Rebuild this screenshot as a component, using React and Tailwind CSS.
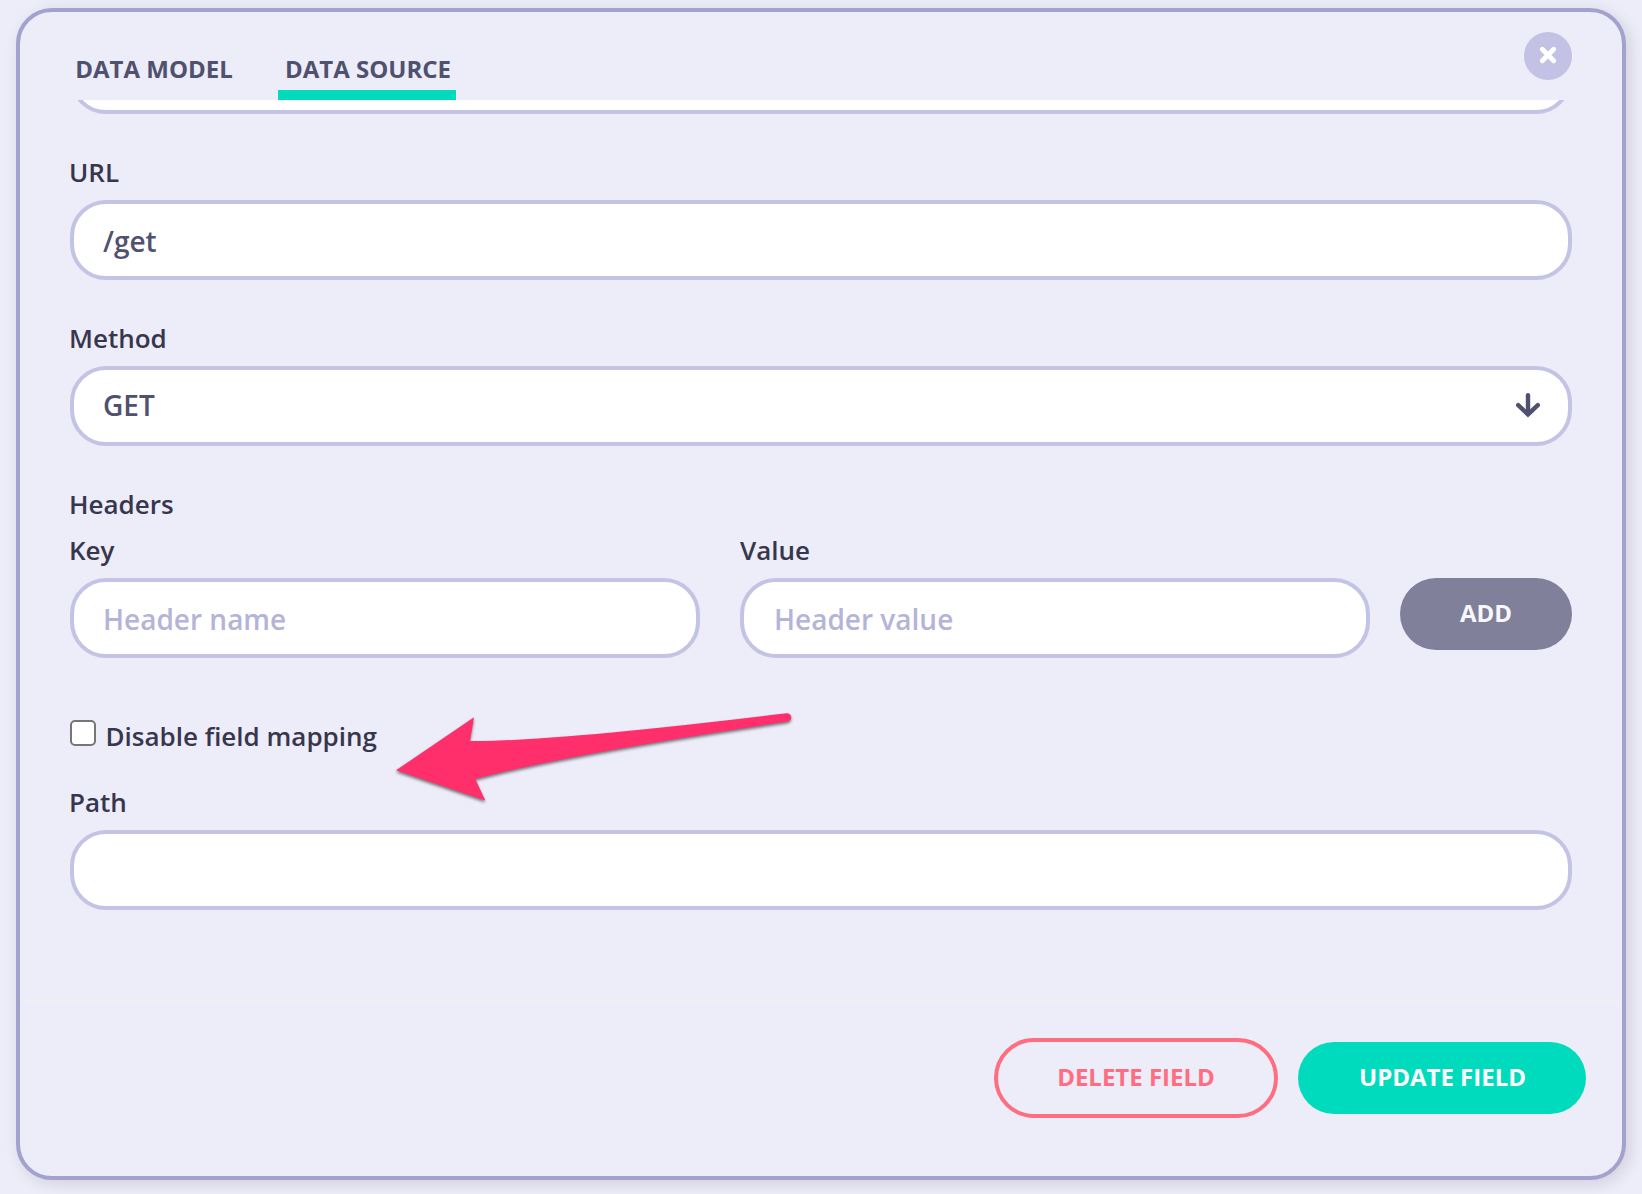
import React from "react";

const box =
  "h-20 w-full rounded-[36px] border-4 border-[#c3c3e6] bg-white px-[29px] text-[28px] font-semibold text-[#50506f] outline-none placeholder:text-[#b4b4d8] placeholder:opacity-100";

function Label({ children }) {
  return (
    <div className="text-[26px] leading-9 font-semibold text-[#37364d]">{children}</div>
  );
}

function Field({ label, children, className = "", labelClassName = "-ml-px" }) {
  return (
    <div className={`flex flex-col gap-2.5 ${className}`}>
      <div className={labelClassName}>
        <Label>{label}</Label>
      </div>
      {children}
    </div>
  );
}

function Pointer() {
  return (
    <svg
      className="pointer-events-none absolute top-[678px] left-[360px] drop-shadow-[0_2px_1.5px_rgba(0,0,0,0.5)]"
      width="440"
      height="130"
      viewBox="0 0 440 130"
    >
      <path
        fill="#ff2f6c"
        d="M16 80.3 L94 27.3 L90 51 Q173.3 51.7 406.5 23.3 A4.1 4.1 0 0 1 407.7 31.5 Q186.7 64.3 95.3 89 L105.3 110.6 Z"
      />
    </svg>
  );
}

export default function App() {
  return (
    <div className="h-[1194px] w-[1642px] overflow-hidden bg-[#edecf9] px-4 pt-2 font-['Open_Sans',sans-serif]">
      <div className="relative flex h-[1172px] w-[1610px] flex-col rounded-[36px] border-4 border-[#a3a2ce] bg-[#edecf9] shadow-[4px_4px_16px_rgba(0,0,0,0.12)]">
        <header className="flex h-[88px] shrink-0 items-end justify-between pr-[50px] pl-[46px] text-2xl leading-8 font-bold text-[#50506f]">
          <nav className="flex gap-[34px]">
            <button className="h-[51px] w-[178px] border-b-10 border-transparent pr-0.5 pb-px">DATA MODEL</button>
            <button className="h-[51px] w-[178px] border-b-10 border-[#00dbbd] pb-px pl-0.5">DATA SOURCE</button>
          </nav>
          <button className="mb-5 flex size-12 items-center justify-center rounded-full bg-[#c3c2e4]">
            <svg width="48" height="48" viewBox="0 0 48 48" stroke="#fff" strokeWidth="4.8" strokeLinecap="round">
              <path d="M18.3 17.3 L29.7 28.7 M29.7 17.3 L18.3 28.7" />
            </svg>
          </button>
        </header>

        <main className="flex h-[900px] shrink-0 flex-col overflow-hidden px-[50px]">
          <div className="-mt-[66px] shrink-0">
            <div className={box} />
          </div>
          <Field label="URL" className="mt-10">
            <input className={`${box} pt-0.5`} defaultValue="/get" />
          </Field>
          <Field label="Method" className="mt-10">
            <div className={`${box} flex items-center justify-between`}>
              <span className="-mt-0.5">GET</span>
              <svg width="28" height="28" viewBox="0 0 28 28" fill="none" stroke="#50506f" strokeWidth="4.4" strokeLinecap="round" className="-mr-[3px]">
                <path d="M14 3.2 V21" />
                <path d="M4.2 13.2 L14 22.4 L23.8 13.2" />
              </svg>
            </div>
          </Field>
          <div className="mt-10 -ml-px">
            <Label>Headers</Label>
          </div>
          <div className="mt-2.5 flex items-start">
            <Field label="Key" className="w-[630px]">
              <input className={`${box} pt-0.5`} placeholder="Header name" />
            </Field>
            <Field label="Value" className="ml-10 w-[630px]" labelClassName="">
              <input className={`${box} pt-0.5 pl-[30px]`} placeholder="Header value" />
            </Field>
            <button className="mt-[46px] ml-[30px] h-[72px] w-[172px] rounded-[36px] bg-[#81809b] pb-0.5 text-2xl font-bold text-[#f8f8fc]">
              ADD
            </button>
          </div>
          <label className="mt-[60px] flex h-9 items-start gap-[9.5px]">
            <input type="checkbox" className="mt-0.5 size-[26px] appearance-none rounded-[5px] border-2 border-[#767676] bg-white" />
            <Label>Disable field mapping</Label>
          </label>
          <Field label="Path" className="mt-[30px]">
            <input className={box} />
          </Field>
        </main>

        <footer className="flex flex-1 items-start justify-end gap-5 border-t-2 border-[#efefef] pt-9 pr-9 text-2xl font-bold">
          <button className="h-20 w-[284px] rounded-[40px] border-4 border-[#ff6e80] pb-0.5 text-[#ff6e80]">DELETE FIELD</button>
          <button className="mt-1 h-[72px] w-[288px] rounded-[36px] bg-[#00dbbd] pb-0.5 pl-px text-white">UPDATE FIELD</button>
        </footer>

        <Pointer />
      </div>
    </div>
  );
}
